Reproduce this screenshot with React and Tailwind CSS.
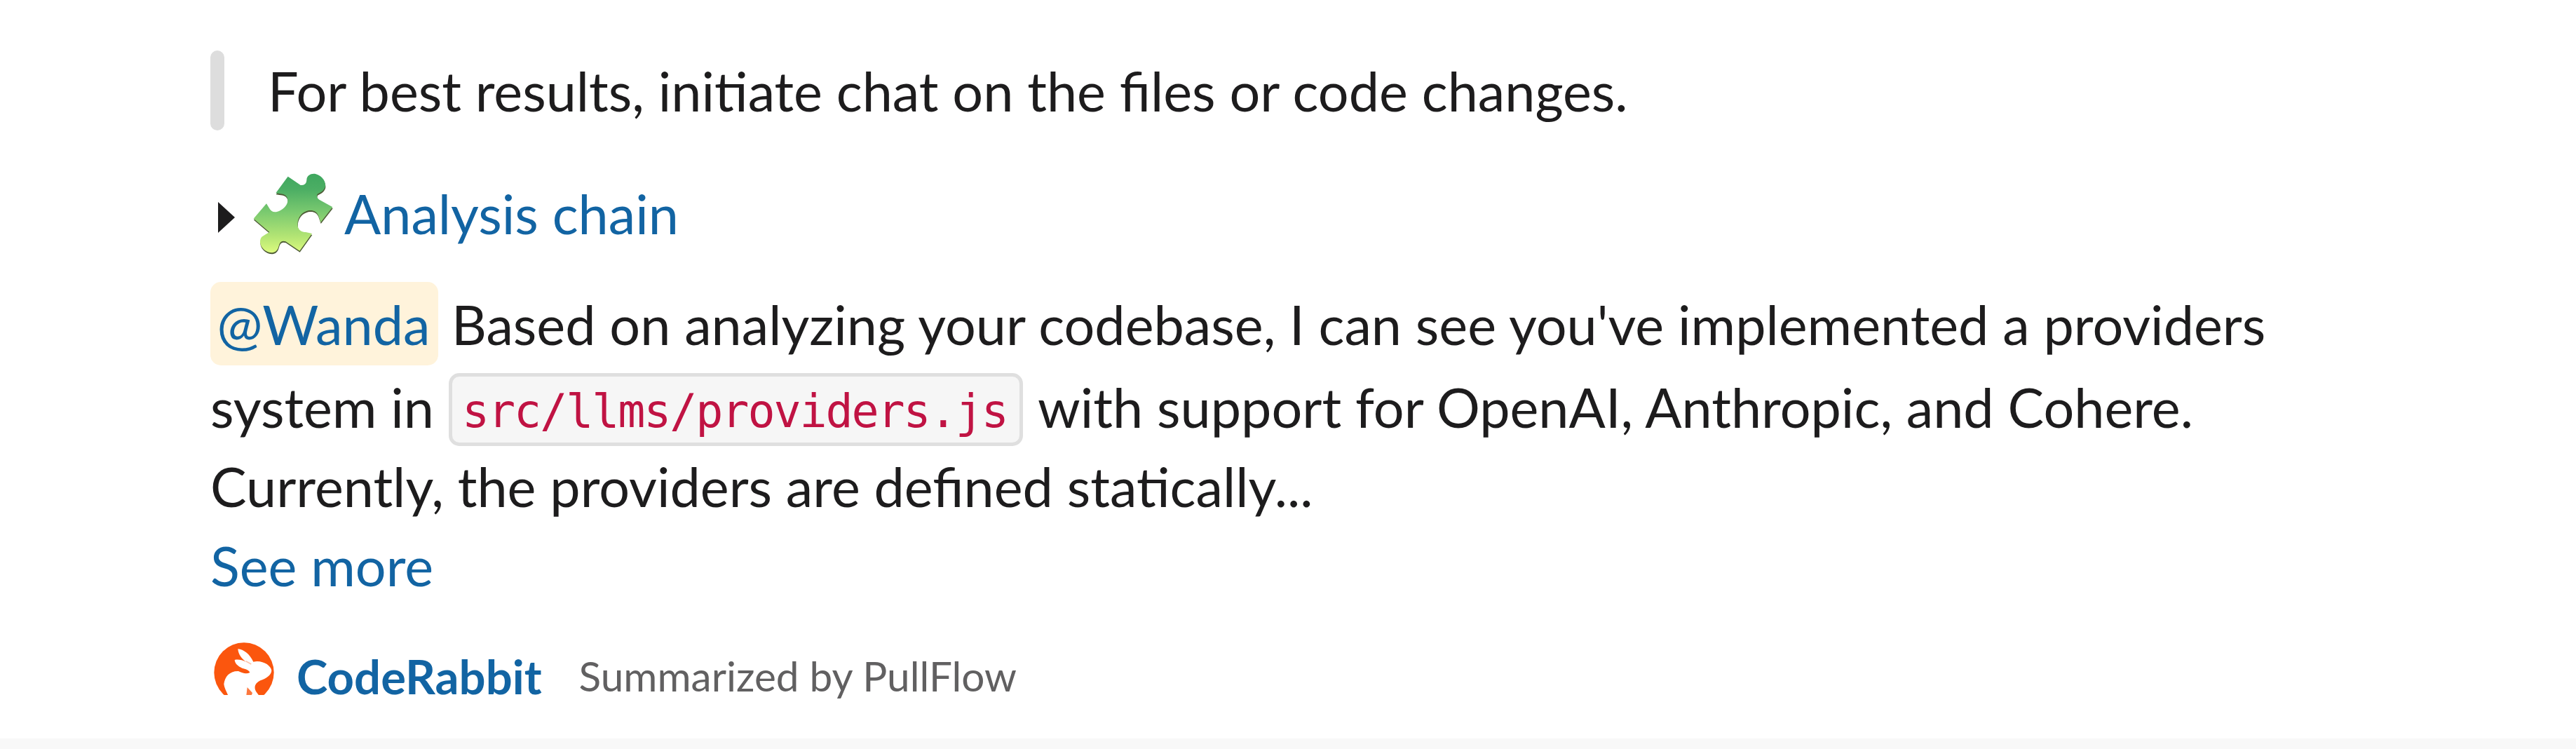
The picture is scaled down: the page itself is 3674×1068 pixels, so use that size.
function PuzzleIcon() {
  const shape = "M212 62L266 99Q288 101 292 80C291 59 308 48 330 51C355 57 374 80 372 103C369 122 352 130 338 137Q332 152 346 161L403 193L352 258L342 229C334 210 318 204 298 208C266 216 250 245 254 275C258 292 272 300 288 300L315 306L262 380L202 340Q178 331 172 362C165 391 137 394 115 379C94 364 86 338 100 320Q115 310 133 300L65 242L120 178L131 196C138 210 150 217 165 213C190 207 210 186 211 166C212 148 198 136 180 136L160 133Z";

  return <svg viewBox="60 45 348 351" className="h-[117px] w-[116px] shrink-0">
      <defs>
        <linearGradient id="puzzle" x1="0" y1="0" x2="0" y2="1">
          <stop offset="0" stopColor="#3fa75f" />
          <stop offset="0.2" stopColor="#4cae64" />
          <stop offset="0.5" stopColor="#7dcb70" />
          <stop offset="0.8" stopColor="#b4e574" />
          <stop offset="1" stopColor="#dcfb7e" />
        </linearGradient>
      </defs>
      <path d={shape} fill="#4d5a35" transform="translate(1 6)" />
      <path d={shape} fill="url(#puzzle)" />
    </svg>;
}

function RabbitLogo() {
  return <svg viewBox="45 48 258 225" className="h-[75px] w-[86px] shrink-0">
      <circle cx="174" cy="177" r="128" fill="#fb560e" />
      <path
        d="M148 76C172 78 199 98 214 131C250 122 290 145 292 169C290 190 268 203 244 211C222 222 213 240 228 262L238 275H106C98 255 90 244 88 226C92 195 112 170 150 171C168 180 184 184 199 177C196 166 180 162 166 158C148 150 135 138 134 123C150 120 166 123 182 131C163 116 150 100 148 76Z"
        fill="#fff"
      />
      <path d="M182 128L205 141" stroke="#fb560e" strokeOpacity="0.35" strokeWidth="5" />
      <path d="M188 240L210 264L206 275H184Z" fill="#fb560e" fillOpacity="0.8" />
    </svg>;
}

function Quote({ children }) {
  return <blockquote className="flex h-[114px] gap-[62px] leading-[115px]">
      <span className="w-5 rounded-full bg-[#dddddd]" />
      <p>{children}</p>
    </blockquote>;
}

function AnalysisToggle() {
  return <div className="mt-[60px] flex h-[117px] items-center">
      <svg viewBox="0 0 25 44" className="mt-[10px] ml-[10px] h-11 w-[25px] shrink-0">
        <path d="M1 0L25 22L1 44Z" fill="#1d1c1d" />
      </svg>
      <span className="ml-[25px] flex">
        <PuzzleIcon />
      </span>
      <a className="ml-[15px] text-[#1264a3]">Analysis chain</a>
    </div>;
}

function App() {
  return <main className="flex h-[1068px] w-[3674px] flex-col justify-between overflow-hidden bg-white font-['Lato',sans-serif] text-[77.37px] whitespace-nowrap text-[#1d1c1d]">
      <article className="pt-[72px] pl-[300px]">
        <Quote>For best results, initiate chat on the files or code changes.</Quote>
        <AnalysisToggle />

        <div className="mt-[39px]">
          <p className="flex h-[119px] items-center leading-[114px]">
            <span className="flex h-[119px] w-[325px] items-center justify-center rounded-[15px] bg-[#fff3db] pr-[2px] text-[#1264a3]">@Wanda</span>
            <span className="ml-[19px]">Based on analyzing your codebase, I can see you've implemented a providers</span>
          </p>
          <p className="flex h-[118px] items-center leading-[114px]">
            <span>system in</span>
            <code className="mt-[8px] ml-[21px] flex h-[104px] w-[819px] items-center rounded-[15px] border-5 border-[#dfdfdf] bg-[#f6f6f6] pt-[6px] pl-[14px] font-['DejaVu_Sans_Mono',monospace] text-[65px] tracking-[-2.1px] text-[#c01343]">
              src/llms/providers.js
            </code>
            <span className="ml-[21px]">with support for OpenAI, Anthropic, and Cohere.</span>
          </p>
          <p className="h-[108px] leading-[108px]">Currently, the providers are defined statically...</p>
          <a className="mt-[2px] block h-[114px] leading-[114px] text-[#1264a3]">See more</a>
        </div>

        <footer className="mt-[53px] flex h-[75px] items-center">
          <span className="ml-[5px] flex">
            <RabbitLogo />
          </span>
          <a className="mt-[22px] ml-[32px] text-[67px] font-bold text-[#1264a3]">CodeRabbit</a>
          <span className="mt-[20px] ml-[53px] text-[58.5px] text-[#616061]">Summarized by PullFlow</span>
        </footer>
      </article>
      <div className="h-[15px] bg-[#f8f8f8]" />
    </main>;
}

export {
  App as default
};
